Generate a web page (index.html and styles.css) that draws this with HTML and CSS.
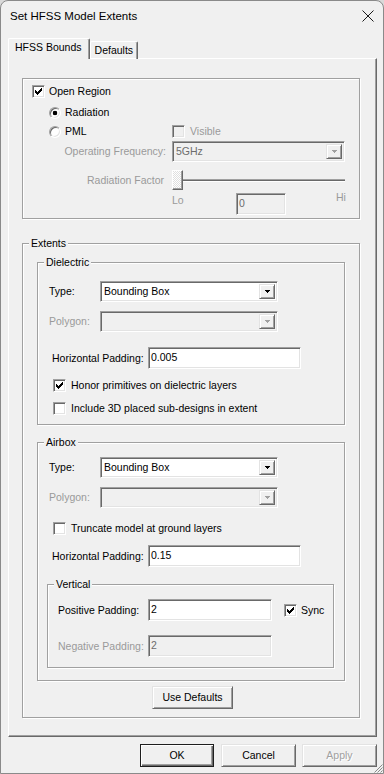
FILE: index.html
```html
<!DOCTYPE html>
<html lang="en">
<head>
    <meta charset="UTF-8">
    <meta name="viewport" content="width=device-width, initial-scale=1.0">
    <title>Set HFSS Model Extents</title>
    <link rel="stylesheet" href="styles.css">
</head>
<body>
    <div class="window">
        <div class="titlebar">
            <span class="title">Set HFSS Model Extents</span>
            <svg class="close" width="12" height="12" viewBox="0 0 12 12">
                <path d="M0.5 0.5L11.5 11.5M11.5 0.5L0.5 11.5" stroke="#1a1a1a" stroke-width="1"/>
            </svg>
        </div>

        <div class="tabs">
            <div class="tab active">HFSS Bounds</div>
            <div class="tab">Defaults</div>
        </div>

        <div class="panel">
            <!-- open region -->
            <div class="group open-region">
                <div class="row open-row">
                    <span class="check">
                        <svg width="11" height="11" viewBox="0 0 11 11"><path d="M2 4h1v3H2z M3 5h1v3H3z M4 6h1v3H4z M5 5h1v3H5z M6 4h1v3H6z M7 3h1v3H7z M8 2h1v3H8z" fill="#000"/></svg>
                    </span>
                    <span class="lbl tight">Open Region</span>
                </div>
                <div class="row radio-row first">
                    <span class="radio on"></span>
                    <span class="lbl">Radiation</span>
                </div>
                <div class="row radio-row pml">
                    <span class="radio"></span>
                    <span class="lbl pml-lbl">PML</span>
                    <span class="check off"></span>
                    <span class="lbl dim">Visible</span>
                </div>
                <div class="row freq-row">
                    <span class="side-lbl dim">Operating Frequency:</span>
                    <div class="combo disabled freq">
                        <span class="combo-text">5GHz</span>
                        <span class="combo-btn"><svg width="5" height="3" viewBox="0 0 5 3"><path d="M0 0h5v1H0z M1 1h3v1H1z M2 2h1v1H2z" fill="#a0a0a0"/></svg></span>
                    </div>
                </div>
                <div class="row slider-row">
                    <span class="side-lbl dim pad">Radiation Factor</span>
                    <div class="slider">
                        <span class="thumb"></span>
                        <span class="track"></span>
                    </div>
                </div>
                <div class="scale-row">
                    <span class="side-lbl"></span>
                    <span class="lo dim">Lo</span>
                    <span class="edit disabled factor">0</span>
                    <span class="hi dim">Hi</span>
                </div>
            </div>

            <!-- extents -->
            <div class="group extents">
                <span class="legend">Extents</span>

                <div class="group dielectric">
                    <span class="legend">Dielectric</span>
                    <div class="row type-row">
                        <span class="type-lbl">Type:</span>
                        <div class="combo">
                            <span class="combo-text">Bounding Box</span>
                            <span class="combo-btn"><svg width="5" height="3" viewBox="0 0 5 3"><path d="M0 0h5v1H0z M1 1h3v1H1z M2 2h1v1H2z" fill="#000"/></svg></span>
                        </div>
                    </div>
                    <div class="row poly-row">
                        <span class="type-lbl dim">Polygon:</span>
                        <div class="combo disabled">
                            <span class="combo-text"></span>
                            <span class="combo-btn"><svg width="5" height="3" viewBox="0 0 5 3"><path d="M0 0h5v1H0z M1 1h3v1H1z M2 2h1v1H2z" fill="#a0a0a0"/></svg></span>
                        </div>
                    </div>
                    <div class="row hpad-row">
                        <span class="hpad-lbl">Horizontal Padding:</span>
                        <span class="edit hpad">0.005</span>
                    </div>
                    <div class="row check-row honor">
                        <span class="check">
                            <svg width="11" height="11" viewBox="0 0 11 11"><path d="M2 4h1v3H2z M3 5h1v3H3z M4 6h1v3H4z M5 5h1v3H5z M6 4h1v3H6z M7 3h1v3H7z M8 2h1v3H8z" fill="#000"/></svg>
                        </span>
                        <span class="lbl">Honor primitives on dielectric layers</span>
                    </div>
                    <div class="row check-row include">
                        <span class="check"></span>
                        <span class="lbl">Include 3D placed sub-designs in extent</span>
                    </div>
                </div>

                <div class="group airbox">
                    <span class="legend">Airbox</span>
                    <div class="row type-row">
                        <span class="type-lbl">Type:</span>
                        <div class="combo">
                            <span class="combo-text">Bounding Box</span>
                            <span class="combo-btn"><svg width="5" height="3" viewBox="0 0 5 3"><path d="M0 0h5v1H0z M1 1h3v1H1z M2 2h1v1H2z" fill="#000"/></svg></span>
                        </div>
                    </div>
                    <div class="row poly-row">
                        <span class="type-lbl dim">Polygon:</span>
                        <div class="combo disabled">
                            <span class="combo-text"></span>
                            <span class="combo-btn"><svg width="5" height="3" viewBox="0 0 5 3"><path d="M0 0h5v1H0z M1 1h3v1H1z M2 2h1v1H2z" fill="#a0a0a0"/></svg></span>
                        </div>
                    </div>
                    <div class="row check-row truncate">
                        <span class="check"></span>
                        <span class="lbl">Truncate model at ground layers</span>
                    </div>
                    <div class="row hpad-row air">
                        <span class="hpad-lbl">Horizontal Padding:</span>
                        <span class="edit hpad">0.15</span>
                    </div>

                    <div class="group vertical">
                        <span class="legend">Vertical</span>
                        <div class="row pad-row pos">
                            <span class="pad-lbl">Positive Padding:</span>
                            <span class="edit vpad">2</span>
                            <span class="check sync">
                                <svg width="11" height="11" viewBox="0 0 11 11"><path d="M2 4h1v3H2z M3 5h1v3H3z M4 6h1v3H4z M5 5h1v3H5z M6 4h1v3H6z M7 3h1v3H7z M8 2h1v3H8z" fill="#000"/></svg>
                            </span>
                            <span class="lbl">Sync</span>
                        </div>
                        <div class="row pad-row neg">
                            <span class="pad-lbl dim">Negative Padding:</span>
                            <span class="edit vpad disabled">2</span>
                        </div>
                    </div>
                </div>

                <button class="btn use-defaults">Use Defaults</button>
            </div>
        </div>

        <div class="footer">
            <button class="btn default ok">OK</button>
            <button class="btn cancel">Cancel</button>
            <button class="btn apply" disabled>Apply</button>
        </div>

        <svg class="grip" width="10" height="10" viewBox="0 0 10 10">
            <path d="M9.5 1.5L1.5 9.5M9.5 4.5L4.5 9.5M9.5 7.5L7.5 9.5" stroke="#8a8a8a" stroke-width="1"/>
        </svg>
    </div>
</body>
</html>
```

FILE: styles.css
```css
* {
    box-sizing: border-box;
}

body {
    margin: 0;
    background: #d9d9d9;
    font-family: "Liberation Sans", Arial, sans-serif;
    font-size: 10.5px;
    line-height: 13px;
    color: #000;
}

.window {
    position: relative;
    width: 384px;
    height: 774px;
    border: 1px solid #8a8a8a;
    border-radius: 8px 8px 0 0;
    background: #f0f0f0;
    overflow: hidden;
}

/* title bar */
.titlebar {
    display: flex;
    align-items: center;
    justify-content: space-between;
    height: 36px;
    padding: 0 9px 6px 9px;
}

.title {
    font-size: 11.5px;
}

.close {
    display: block;
}

/* tabs */
.tabs {
    display: flex;
    align-items: flex-end;
    height: 22px;
    padding-left: 7px;
}

.tab {
    height: 18px;
    padding: 0 4px;
    border: 1px solid #fff;
    border-right-color: #696969;
    border-bottom: none;
    border-radius: 2px 2px 0 0;
    box-shadow: inset -1px 0 0 #a0a0a0;
    line-height: 16px;
}

.tab.active {
    position: relative;
    z-index: 1;
    height: 21px;
    padding: 0 7px 0 6px;
    background: #f0f0f0;
    line-height: 17px;
}

.panel {
    width: 369px;
    height: 679px;
    margin: -1px 0 0 7px;
    padding: 19px 0 0 13px;
    border: 1px solid;
    border-color: #fff #696969 #696969 #fff;
    box-shadow: inset -1px -1px 0 #a0a0a0;
}

/* group boxes */
.group {
    position: relative;
    border: 1px solid #a0a0a0;
    box-shadow: inset 1px 1px 0 #fff, 1px 1px 0 #fff;
}

.legend {
    position: absolute;
    top: -7px;
    left: 6px;
    padding: 0 2px;
    background: #f0f0f0;
}

.open-region {
    width: 338px;
    height: 141px;
}

.extents {
    width: 338px;
    height: 475px;
    margin-top: 24px;
}

.dielectric {
    width: 308px;
    height: 163px;
    margin: 18px 0 0 14px;
}

.airbox {
    width: 308px;
    height: 239px;
    margin: 17px 0 0 14px;
}

.vertical {
    width: 287px;
    height: 84px;
    margin: 17px 0 0 9px;
}

/* rows */
.row {
    display: flex;
    align-items: center;
}

.lbl {
    margin-left: 5px;
    white-space: nowrap;
}

.lbl.tight {
    margin-left: 4px;
}

.dim {
    color: #9a9a9a;
}

.open-row {
    height: 13px;
    margin-top: 6px;
    padding-left: 9px;
}

.radio-row {
    height: 13px;
    padding-left: 26px;
}

.radio-row.first {
    margin-top: 8px;
}

.radio-row.pml {
    margin-top: 6px;
}

.radio-row .lbl {
    margin-left: 4px;
}

.pml-lbl {
    width: 107px;
}

.radio-row .check + .lbl {
    margin-left: 5px;
}

.side-lbl {
    flex: none;
    width: 143px;
    margin-right: 6px;
    text-align: right;
    white-space: nowrap;
}

.side-lbl.pad {
    padding-right: 2px;
}

.freq-row {
    height: 21px;
    margin-top: 3px;
}

.slider-row {
    height: 20px;
    margin-top: 8px;
}

.scale-row {
    display: flex;
    align-items: flex-start;
    height: 22px;
    margin-top: 3px;
}

.lo {
    width: 64px;
    margin-top: 1px;
}

.hi {
    margin: -2px 0 0 50px;
}

.type-row {
    height: 21px;
    padding-left: 11px;
}

.dielectric .type-row {
    margin-top: 18px;
}

.airbox .type-row {
    margin-top: 14px;
}

.type-lbl {
    width: 51px;
    flex: none;
}

.poly-row {
    height: 21px;
    margin-top: 9px;
    padding-left: 11px;
}

.hpad-row {
    height: 22px;
    margin-top: 15px;
    padding-left: 14px;
}

.hpad-row.air {
    margin-top: 10px;
}

.hpad-lbl {
    width: 96px;
    flex: none;
    white-space: nowrap;
}

.check-row {
    height: 13px;
    padding-left: 15px;
}

.check-row.honor,
.check-row.include {
    margin-top: 10px;
}

.check-row.truncate {
    margin-top: 14px;
}

.pad-row {
    height: 22px;
    margin-top: 14px;
    padding-left: 10px;
}

.pad-lbl {
    width: 90px;
    flex: none;
    white-space: nowrap;
}

.sync {
    margin-left: 12px;
}

.pad-row .lbl {
    margin-left: 4px;
}

/* controls */
.check {
    flex: none;
    width: 13px;
    height: 13px;
    background: #fff;
    border: 1px solid;
    border-color: #a0a0a0 #fff #fff #a0a0a0;
    box-shadow: inset 1px 1px 0 #696969, inset -1px -1px 0 #e3e3e3;
}

.check svg {
    display: block;
}

.check.off {
    background: #f0f0f0;
}

.radio {
    flex: none;
    width: 12px;
    height: 12px;
    border-radius: 50%;
    border: 1px solid;
    border-color: #a0a0a0 #fff #fff #a0a0a0;
    box-shadow: inset 1px 1px 0 #696969, inset -1px -1px 0 #e3e3e3;
    background: #fff;
}

.radio.on {
    background: radial-gradient(circle, #000 0 2px, #fff 2.6px);
}

.combo {
    display: flex;
    width: 178px;
    height: 21px;
    padding: 2px;
    background: #fff;
    border: 1px solid;
    border-color: #a0a0a0 #fff #fff #a0a0a0;
    box-shadow: inset 1px 1px 0 #696969, inset -1px -1px 0 #e3e3e3;
}

.combo.freq {
    width: 173px;
}

.combo.disabled {
    background: #f0f0f0;
    color: #6d6d6d;
}

.combo-text {
    flex: 1;
    padding-left: 1px;
    line-height: 15px;
}

.combo-btn {
    display: flex;
    align-items: center;
    justify-content: center;
    width: 16px;
    background: #f0f0f0;
    border: 1px solid;
    border-color: #e3e3e3 #696969 #696969 #e3e3e3;
    box-shadow: inset 1px 1px 0 #fff, inset -1px -1px 0 #a0a0a0;
}

.combo-btn svg {
    display: block;
}

.edit {
    flex: none;
    height: 22px;
    padding: 0 3px 0 1px;
    background: #fff;
    border: 1px solid;
    border-color: #a0a0a0 #fff #fff #a0a0a0;
    box-shadow: inset 1px 1px 0 #696969, inset -1px -1px 0 #e3e3e3;
    line-height: 18px;
    padding-left: 2px;
}

.edit.disabled {
    background: #f0f0f0;
    color: #6d6d6d;
}

.edit.factor {
    width: 50px;
}

.edit.hpad {
    width: 153px;
}

.edit.vpad {
    width: 124px;
}

.slider {
    display: flex;
    align-items: center;
    width: 173px;
    height: 20px;
}

.thumb {
    flex: none;
    width: 11px;
    height: 20px;
    border: 1px solid;
    border-color: #fff #696969 #696969 #fff;
    box-shadow: inset -1px -1px 0 #a0a0a0;
    background: repeating-conic-gradient(#fff 0 25%, #e0e0e0 0 50%) 0 0 / 2px 2px;
}

.track {
    flex: 1;
    height: 3px;
    border-top: 1px solid #a0a0a0;
    border-bottom: 1px solid #fff;
    background: #696969;
}

/* buttons */
.btn {
    display: block;
    height: 23px;
    padding: 0;
    font: inherit;
    color: #000;
    background: #f0f0f0;
    border: 1px solid;
    border-color: #e3e3e3 #696969 #696969 #e3e3e3;
    box-shadow: inset 1px 1px 0 #fff, inset -1px -1px 0 #a0a0a0;
}

.btn.default {
    border-color: #1e1e1e;
    box-shadow: inset 1px 1px 0 #fff, inset -1px -1px 0 #696969, inset -2px -2px 0 #a0a0a0;
}

.btn:disabled {
    color: #a0a0a0;
    text-shadow: 1px 1px 0 #fff;
}

.use-defaults {
    width: 81px;
    margin: 5px 0 0 129px;
}

.footer {
    display: flex;
    justify-content: flex-end;
    margin-top: 7px;
    padding-right: 6px;
}

.ok {
    width: 74px;
}

.cancel {
    width: 75px;
    margin-left: 7px;
}

.apply {
    width: 75px;
    margin-left: 6px;
}

.grip {
    position: absolute;
    right: 0;
    bottom: 0;
}
```
